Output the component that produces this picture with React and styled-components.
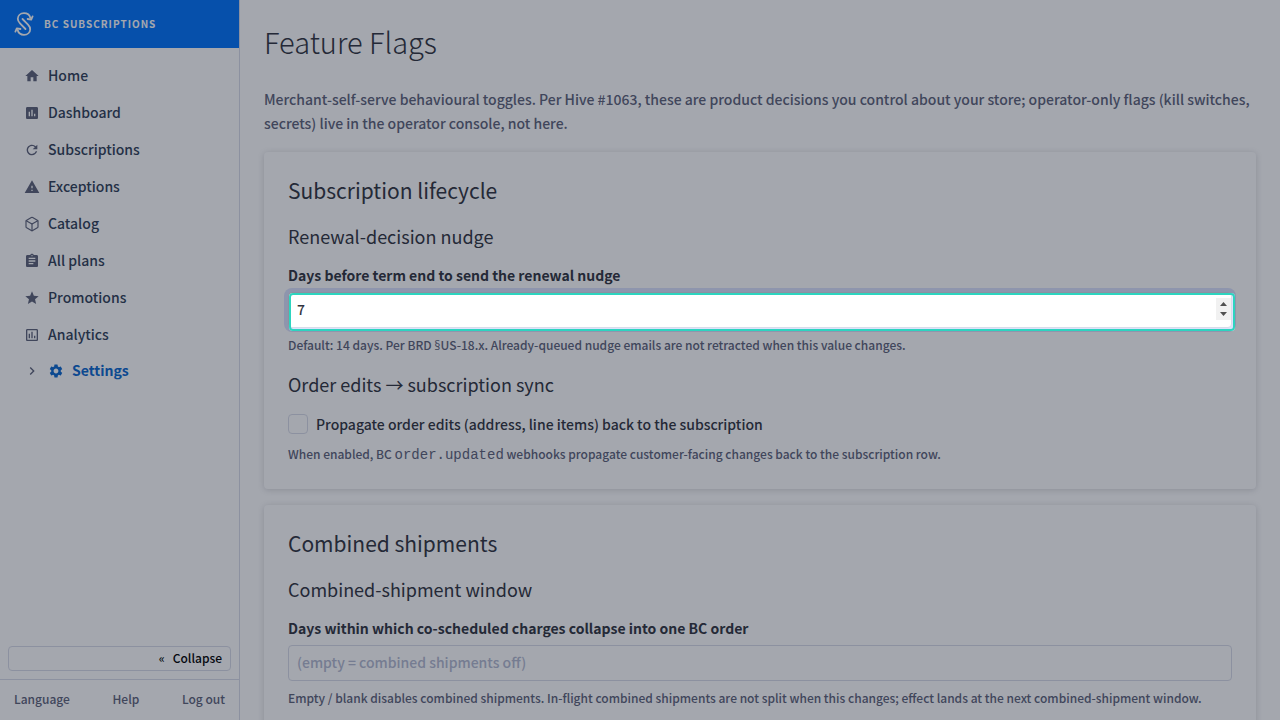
import React from "react"
import styled, { createGlobalStyle } from "styled-components"
import {
    MdAssessment,
    MdAssignment,
    MdChevronRight,
    MdHome,
    MdOutlineAssessment,
    MdRefresh,
    MdSettings,
    MdStar,
    MdWarning,
} from "react-icons/md"
import { Box } from "lucide-react"

const navItems = [
    { label: "Home", icon: <MdHome /> },
    { label: "Dashboard", icon: <MdAssessment /> },
    { label: "Subscriptions", icon: <MdRefresh /> },
    { label: "Exceptions", icon: <MdWarning /> },
    { label: "Catalog", icon: <Box strokeWidth={1.75} /> },
    { label: "All plans", icon: <MdAssignment /> },
    { label: "Promotions", icon: <MdStar /> },
    { label: "Analytics", icon: <MdOutlineAssessment /> },
]

function Logo() {
    return (
        <svg width="20" height="24" viewBox="0 0 20 24" fill="none" stroke="currentColor" strokeWidth="1.8" strokeLinecap="round" strokeLinejoin="round" aria-hidden="true">
            <path d="M16.400 6C15.600 3 13.200 1.200 10 1.200C6.400 1.200 3.800 3.600 3.800 6.800C3.800 8.800 4.600 10 6 11.400L11.500 17" />
            <path d="M3.600 18C4.400 21 6.800 22.800 10 22.800C13.600 22.800 16.200 20.400 16.200 17.200C16.200 15.200 15.400 14 14 12.600L8.500 7" />
            <path d="M13.600 7L17.200 7.600L18.600 4.400" />
            <path d="M6.400 17L2.800 16.400L1.400 19.600" />
        </svg>
    )
}

function Sidebar() {
    return (
        <Aside>
            <Brand href="#home">
                <Logo />
                BC SUBSCRIPTIONS
            </Brand>
            <Nav aria-label="Main">
                {navItems.map(({ label, icon }) => (
                    <NavLink key={label} href={`#${label}`}>
                        {icon}
                        {label}
                    </NavLink>
                ))}
                <NavLink href="#Settings" $active aria-current="page">
                    <MdChevronRight />
                    <MdSettings />
                    Settings
                </NavLink>
            </Nav>
            <Collapse type="button">
                <span>«</span>
                Collapse
            </Collapse>
            <Footer>
                <a href="#language">Language</a>
                <a href="#help">Help</a>
                <a href="#logout">Log out</a>
            </Footer>
        </Aside>
    )
}

export default function App() {
    return (
        <Shell>
            <GlobalStyle />
            <Sidebar />
            <Main>
                <h1>Feature Flags</h1>
                <Intro>
                    Merchant-self-serve behavioural toggles. Per Hive #1063, these are product decisions you control about
                    your store; operator-only flags (kill switches, secrets) live in the operator console, not here.
                </Intro>
                <Panel>
                    <h2>Subscription lifecycle</h2>
                    <h3>Renewal-decision nudge</h3>
                    <Label htmlFor="nudge-days">Days before term end to send the renewal nudge</Label>
                    <Field>
                        <Input id="nudge-days" type="number" defaultValue="7" $focused />
                        <Spotlight />
                    </Field>
                    <Help>
                        Default: 14 days. Per BRD <Sign>§</Sign>US-18.x. Already-queued nudge emails are not retracted when
                        this value changes.
                    </Help>
                    <h3>Order edits → subscription sync</h3>
                    <CheckRow>
                        <input id="propagate" type="checkbox" />
                        <label htmlFor="propagate">Propagate order edits (address, line items) back to the subscription</label>
                    </CheckRow>
                    <Help>
                        When enabled, BC <code>order.updated</code> webhooks propagate customer-facing changes back to the
                        subscription row.
                    </Help>
                </Panel>
                <Panel>
                    <h2>Combined shipments</h2>
                    <h3>Combined-shipment window</h3>
                    <Label htmlFor="window-days">Days within which co-scheduled charges collapse into one BC order</Label>
                    <Field>
                        <Input id="window-days" type="number" placeholder="(empty = combined shipments off)" />
                    </Field>
                    <Help>
                        Empty / blank disables combined shipments. In-flight combined shipments are not split when this
                        changes; effect lands at the next combined-shipment window.
                    </Help>
                </Panel>
            </Main>
        </Shell>
    )
}

const spinner = encodeURIComponent(
    '<svg xmlns="http://www.w3.org/2000/svg" width="15" height="22"><path fill="#505050" d="M4 8L7.500 4L11 8ZM4 14L7.500 18L11 14Z"/></svg>'
)

const GlobalStyle = createGlobalStyle`
    *, *::before, *::after {
        box-sizing: border-box;
    }

    html {
        scrollbar-width: none;
    }

    body {
        margin: 0;
        background: #ffffff;
        color: #313440;
        font-family: "Source Sans Pro", "Noto Sans CJK SC", sans-serif;
        font-size: 14px;
        font-weight: 500;
        line-height: 24px;
    }

    h1, h2, h3, p {
        margin: 0;
    }

    a {
        color: inherit;
        text-decoration: none;
    }

    input, button {
        font: inherit;
    }
`

const Shell = styled.div`
    display: flex;
    align-items: flex-start;
    min-height: 100vh;
`

const Aside = styled.aside`
    display: flex;
    flex-direction: column;
    flex: 0 0 240px;
    height: 100vh;
    position: sticky;
    top: 0;
    border-right: 1px solid #d9dce9;
`

const Brand = styled.a`
    display: flex;
    align-items: center;
    gap: 10px;
    height: 48px;
    padding: 0 14px;
    background: #0073fa;
    color: #ffffff;
    font-size: 10px;
    font-weight: 700;
    letter-spacing: 1px;
`

const Nav = styled.nav`
    display: flex;
    flex-direction: column;
    flex: 1;
    padding-top: 8px;
`

const NavLink = styled.a`
    display: flex;
    align-items: center;
    gap: 8px;
    height: ${({ $active }) => ($active ? "35px" : "37px")};
    padding: 0 24px;
    color: ${({ $active }) => ($active ? "#0b68cf" : "#313f58")};
    font-weight: ${({ $active }) => ($active ? 700 : 500)};

    svg {
        width: 16px;
        height: 16px;
        margin-top: 2px;
        color: #5e637a;
    }

    svg + svg {
        color: inherit;
    }
`

const Collapse = styled.button`
    display: flex;
    justify-content: flex-end;
    align-items: center;
    gap: 8px;
    height: 25px;
    margin: 0 8px 8px;
    padding: 0 8px 2px;
    background: transparent;
    border: 1px solid #d9dce9;
    border-radius: 4px;
    color: #000000;
    font-size: 12px;
`

const Footer = styled.footer`
    display: flex;
    justify-content: space-between;
    padding: 7px 14px 9px;
    border-top: 1px solid #d9dce9;
    color: #5e637a;
    font-size: 12px;
`

const Main = styled.main`
    flex: 1;
    min-width: 0;
    padding: 22px 24px 24px;

    h1 {
        margin-bottom: 27px;
        font-size: 29px;
        font-weight: 200;
        line-height: 38px;
    }
`

const Intro = styled.p`
    margin-bottom: 17px;
    color: #5e637a;
`

const Panel = styled.section`
    margin-bottom: 16px;
    padding: 22px 24px 24px;
    border-radius: 4px;
    box-shadow: 0 1px 6px rgba(49, 52, 64, 0.2);

    h2 {
        margin-bottom: 18px;
        font-size: 21px;
        font-weight: 400;
        line-height: 32px;
    }

    h3 {
        margin: 16px 0 15px;
        font-size: 18px;
        font-weight: 400;
        line-height: 24px;
    }
`

const Label = styled.label`
    display: block;
    margin-bottom: 5px;
    font-weight: 700;
`

const Field = styled.div`
    position: relative;
`

const Input = styled.input`
    display: block;
    width: 100%;
    height: 36px;
    padding: 5px 0 7px 8px;
    background: #ffffff;
    border: 1px solid #d9dce9;
    border-radius: 4px;
    outline: none;
    color: #313440;
    box-shadow: ${({ $focused }) => ($focused ? "0 0 0 4px #dbe3fe" : "none")};

    &::placeholder {
        color: #b4bad1;
    }

    &::-webkit-inner-spin-button {
        appearance: none;
        width: 15px;
        height: 22px;
        background: #f1f1f1 url("data:image/svg+xml,${spinner}") no-repeat;
        opacity: ${({ $focused }) => ($focused ? 1 : 0)};
    }
`

/* Ring around the highlighted field; its spread dims the rest of the page */
const Spotlight = styled.div`
    position: absolute;
    inset: 1px -3px -3px 1px;
    z-index: 10;
    border: 2px solid #2dd4bf;
    border-radius: 4px;
    box-shadow: 0 0 0 9999px rgba(15, 23, 42, 0.38);
    pointer-events: none;
`

const Help = styled.p`
    margin-top: 7px;
    color: #5e637a;
    font-size: 12px;
    line-height: 20px;

    code {
        font-family: "Liberation Mono", monospace;
        font-size: 14px;
    }
`

/* The CJK family draws this sign full width */
const Sign = styled.span`
    font-family: "Open Sans", sans-serif;
`

const CheckRow = styled.div`
    display: flex;
    align-items: center;
    gap: 8px;
    min-height: 26px;

    input {
        appearance: none;
        width: 20px;
        height: 20px;
        margin: 0;
        border: 1px solid #d9dce9;
        border-radius: 4px;
    }
`
